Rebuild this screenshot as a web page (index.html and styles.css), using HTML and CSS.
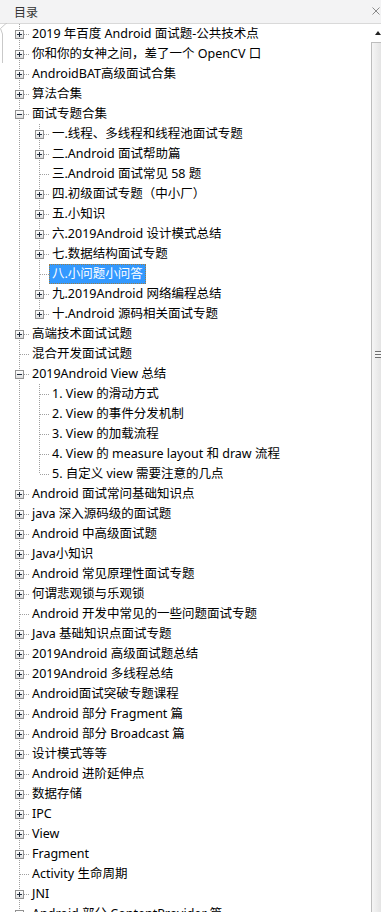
FILE: index.html
```html
<!DOCTYPE html>
<html lang="zh-CN">
<head>
<meta charset="utf-8">
<title>目录</title>
<link rel="stylesheet" href="styles.css">
</head>
<body>
<div class="panel">
  <div class="head">
    <span class="title">目录</span>
    <svg class="close" width="8" height="8" viewBox="0 0 8 8"><path d="M0.5 0.5L7.5 7.5M7.5 0.5L0.5 7.5" stroke="#8a8a8a" stroke-width="1" fill="none"/></svg>
  </div>
  <svg class="notch" width="7" height="40" viewBox="0 0 7 40"><path d="M7 0.5H6L0.5 5.5L2.5 11V40" stroke="#c9c9c9" stroke-width="1" fill="none"/></svg>
  <div class="main">
    <div class="tree">
      <div class="row"><i class="tog"></i><i class="dash"></i><span class="label">2019 年百度 Android 面试题-公共技术点</span></div>
      <div class="row"><i class="tog"></i><i class="dash"></i><span class="label">你和你的女神之间，差了一个 OpenCV 口</span></div>
      <div class="row"><i class="tog"></i><i class="dash"></i><span class="label">AndroidBAT高级面试合集</span></div>
      <div class="row"><i class="tog"></i><i class="dash"></i><span class="label">算法合集</span></div>
      <div class="row"><i class="tog minus"></i><i class="dash"></i><span class="label">面试专题合集</span></div>
      <div class="group">
        <div class="row l2"><i class="tog"></i><i class="dash"></i><span class="label">一.线程、多线程和线程池面试专题</span></div>
        <div class="row l2"><i class="tog"></i><i class="dash"></i><span class="label">二.Android 面试帮助篇</span></div>
        <div class="row l2"><i class="dash long"></i><span class="label">三.Android 面试常见 58 题</span></div>
        <div class="row l2"><i class="tog"></i><i class="dash"></i><span class="label">四.初级面试专题（中小厂）</span></div>
        <div class="row l2"><i class="tog"></i><i class="dash"></i><span class="label">五.小知识</span></div>
        <div class="row l2"><i class="tog"></i><i class="dash"></i><span class="label">六.2019Android 设计模式总结</span></div>
        <div class="row l2"><i class="tog"></i><i class="dash"></i><span class="label">七.数据结构面试专题</span></div>
        <div class="row l2"><i class="dash long"></i><span class="label sel">八.小问题小问答</span></div>
        <div class="row l2"><i class="tog"></i><i class="dash"></i><span class="label">九.2019Android 网络编程总结</span></div>
        <div class="row l2"><i class="tog"></i><i class="dash"></i><span class="label">十.Android 源码相关面试专题</span></div>
      </div>
      <div class="row"><i class="tog"></i><i class="dash"></i><span class="label">高端技术面试试题</span></div>
      <div class="row"><i class="dash long"></i><span class="label">混合开发面试试题</span></div>
      <div class="row"><i class="tog minus"></i><i class="dash"></i><span class="label">2019Android View 总结</span></div>
      <div class="group">
        <div class="row l2"><i class="dash long"></i><span class="label">1. View 的滑动方式</span></div>
        <div class="row l2"><i class="dash long"></i><span class="label">2. View 的事件分发机制</span></div>
        <div class="row l2"><i class="dash long"></i><span class="label">3. View 的加载流程</span></div>
        <div class="row l2"><i class="dash long"></i><span class="label">4. View 的 measure layout 和 draw 流程</span></div>
        <div class="row l2"><i class="dash long"></i><span class="label">5. 自定义 view 需要注意的几点</span></div>
      </div>
      <div class="row"><i class="tog"></i><i class="dash"></i><span class="label">Android 面试常问基础知识点</span></div>
      <div class="row"><i class="tog"></i><i class="dash"></i><span class="label">java 深入源码级的面试题</span></div>
      <div class="row"><i class="tog"></i><i class="dash"></i><span class="label">Android 中高级面试题</span></div>
      <div class="row"><i class="tog"></i><i class="dash"></i><span class="label">Java小知识</span></div>
      <div class="row"><i class="tog"></i><i class="dash"></i><span class="label">Android 常见原理性面试专题</span></div>
      <div class="row"><i class="tog"></i><i class="dash"></i><span class="label">何谓悲观锁与乐观锁</span></div>
      <div class="row"><i class="dash long"></i><span class="label">Android 开发中常见的一些问题面试专题</span></div>
      <div class="row"><i class="tog"></i><i class="dash"></i><span class="label">Java 基础知识点面试专题</span></div>
      <div class="row"><i class="tog"></i><i class="dash"></i><span class="label">2019Android 高级面试题总结</span></div>
      <div class="row"><i class="tog"></i><i class="dash"></i><span class="label">2019Android 多线程总结</span></div>
      <div class="row"><i class="tog"></i><i class="dash"></i><span class="label">Android面试突破专题课程</span></div>
      <div class="row"><i class="tog"></i><i class="dash"></i><span class="label">Android 部分 Fragment 篇</span></div>
      <div class="row"><i class="tog"></i><i class="dash"></i><span class="label">Android 部分 Broadcast 篇</span></div>
      <div class="row"><i class="tog"></i><i class="dash"></i><span class="label">设计模式等等</span></div>
      <div class="row"><i class="tog"></i><i class="dash"></i><span class="label">Android 进阶延伸点</span></div>
      <div class="row"><i class="tog"></i><i class="dash"></i><span class="label">数据存储</span></div>
      <div class="row"><i class="tog"></i><i class="dash"></i><span class="label">IPC</span></div>
      <div class="row"><i class="tog"></i><i class="dash"></i><span class="label">View</span></div>
      <div class="row"><i class="tog"></i><i class="dash"></i><span class="label">Fragment</span></div>
      <div class="row"><i class="dash long"></i><span class="label">Activity 生命周期</span></div>
      <div class="row"><i class="tog"></i><i class="dash"></i><span class="label">JNI</span></div>
      <div class="row"><i class="tog"></i><i class="dash"></i><span class="label">Android 部分 ContentProvider 篇</span></div>
    </div>
    <div class="scroll">
      <div class="arrow"><svg width="6" height="4" viewBox="0 0 6 4"><path d="M3 0L6 4H0Z" fill="#222"/></svg></div>
      <div class="thumb"><div class="grip"></div></div>
    </div>
  </div>
</div>
</body>
</html>
```
FILE: styles.css
```css
html, body {
  margin: 0;
  padding: 0;
  background: #fff;
}
body {
  width: 381px;
  height: 912px;
  overflow: hidden;
  font-family: "Noto Sans", "Noto Sans CJK SC", sans-serif;
  font-size: 12.5px;
  color: #000;
}
.panel {
  position: relative;
  height: 912px;
  display: flex;
  flex-direction: column;
}
.head {
  height: 23px;
  flex: none;
  background: #f3f3f4;
  border-bottom: 1px solid #d9d9d9;
  display: flex;
  align-items: center;
  justify-content: space-between;
  padding: 0 1px 0 14px;
}
.title {
  font-size: 12px;
  color: #333;
  font-family: "Noto Sans CJK SC", sans-serif;
}
.close {
  margin-top: -1px;
}
.notch {
  position: absolute;
  left: 0;
  top: 23px;
}
.main {
  flex: 1;
  display: flex;
  min-height: 0;
}
.tree {
  flex: 1;
  overflow: hidden;
  background-image: linear-gradient(to bottom, #a0a0a0 50%, transparent 50%);
  background-size: 1px 2px;
  background-repeat: repeat-y;
  background-position: 19px 0;
}
.group {
  background-image: linear-gradient(#fff, #fff), linear-gradient(to bottom, #a0a0a0 50%, transparent 50%);
  background-size: 1px 10px, 1px 2px;
  background-repeat: no-repeat, repeat-y;
  background-position: 39px 100%, 39px 0;
}
.row {
  height: 20px;
  display: flex;
  align-items: flex-start;
  padding-left: 15px;
  white-space: nowrap;
}
.row.l2 {
  padding-left: 35px;
}
.tog {
  flex: none;
  width: 9px;
  height: 9px;
  box-sizing: border-box;
  margin-top: 6px;
  border: 1px solid #919191;
  background:
    linear-gradient(#1e2a3a, #1e2a3a) center / 5px 1px no-repeat,
    linear-gradient(#1e2a3a, #1e2a3a) center / 1px 5px no-repeat,
    linear-gradient(#ffffff, #dedede);
}
.tog.minus {
  background:
    linear-gradient(#1e2a3a, #1e2a3a) center / 5px 1px no-repeat,
    linear-gradient(#ffffff, #dedede);
}
.dash {
  flex: none;
  width: 5px;
  height: 1px;
  margin-top: 10px;
  background: linear-gradient(to right, #a0a0a0 50%, transparent 50%) 0 0 / 2px 1px repeat-x;
}
.dash.long {
  width: 9px;
  margin-left: 5px;
}
.label {
  height: 18px;
  line-height: 18px;
  padding: 0 2px;
  border: 1px solid transparent;
}
.label.sel {
  background: #3399ff;
  color: #fff;
  border: 1px dotted #9c7d45;
}
.scroll {
  width: 10px;
  flex: none;
  display: flex;
  flex-direction: column;
}
.arrow {
  height: 18px;
  flex: none;
  display: flex;
  justify-content: center;
  padding-left: 3px;
  padding-top: 7px;
  box-sizing: border-box;
}
.arrow svg {
  display: block;
}
.thumb {
  flex: 1;
  border-left: 1px solid #bdbdbd;
  border-top: 1px solid #bdbdbd;
  background: linear-gradient(to right, #f5f5f5, #e4e4e4);
}
.grip {
  margin-top: 308px;
  margin-left: 3px;
  height: 7px;
  background: linear-gradient(to bottom, #6f6f6f 0 1px, #f5f5f5 1px 3px, #6f6f6f 3px 4px, #f5f5f5 4px 6px, #6f6f6f 6px 7px);
}
```
